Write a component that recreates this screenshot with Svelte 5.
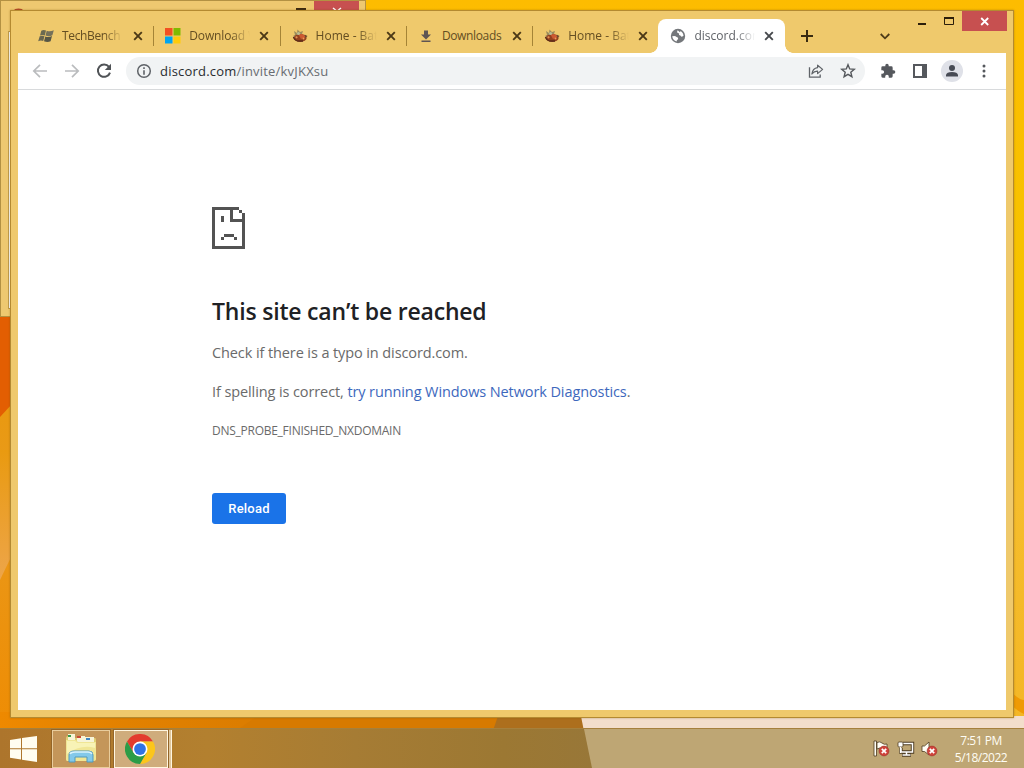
<script>
  const tabs = [
    { title: 'TechBench b', icon: 'flag', ls: -0.35 },
    { title: 'Download V', icon: 'ms', ls: -0.15 },
    { title: 'Home - Bat', icon: 'bug', ls: 0 },
    { title: 'Downloads', icon: 'down', ls: -0.35 },
    { title: 'Home - Bat', icon: 'bug', ls: 0 },
    { title: 'discord.com', icon: 'globe', ls: 0, active: true }
  ];
</script>

<div class="desktop">
  <svg class="wallpaper" width="1024" height="768" viewBox="0 0 1024 768" aria-hidden="true">
    <defs>
      <linearGradient id="left" x1="0" y1="0" x2="0" y2="1">
        <stop offset="0" stop-color="#e99800" /><stop offset=".4" stop-color="#e99a1c" /><stop offset="1" stop-color="#ef8a00" />
      </linearGradient>
      <linearGradient id="right" x1="0" y1="0" x2="0" y2="1">
        <stop offset="0" stop-color="#fdbc00" /><stop offset=".42" stop-color="#f5c400" /><stop offset=".65" stop-color="#f6bd2c" /><stop offset="1" stop-color="#f3b524" />
      </linearGradient>
      <linearGradient id="floor" x1="0" y1="0" x2="1" y2="0">
        <stop offset="0" stop-color="#ee8900" /><stop offset=".25" stop-color="#e28100" /><stop offset=".6" stop-color="#d97b00" /><stop offset="1" stop-color="#b87118" />
      </linearGradient>
      <linearGradient id="streak" x1="0" y1="0" x2="0" y2="1">
        <stop offset="0" stop-color="#e99a10" /><stop offset="1" stop-color="#eda54a" />
      </linearGradient>
    </defs>
    <rect width="1024" height="768" fill="url(#right)" />
    <rect y="300" width="512" height="468" fill="url(#left)" />
    <path d="M0 300H12V404L0 417Z" fill="#e35e02" />
    <path d="M0 450H12V555L0 580Z" fill="url(#streak)" />
    <rect y="712" width="500" height="56" fill="url(#floor)" />
    <path d="M240 728L256 717H512V768H200Z" fill="#d77a00" />
    <path d="M498 716H584L592 768H480Z" fill="#ad6f1d" />
    <path d="M581 716H1024V768H591Z" fill="#f3decb" />
    <path d="M1010 690Q1018 700 1024 700V714Q1016 710 1010 704Z" fill="#ef9a05" />
  </svg>

  <div class="back-window">
    <svg class="back-title" width="364" height="12" viewBox="0 0 364 12">
      <path d="M12 10a6 4 0 0 1 11 0Z" fill="#b5482b" />
      <path d="M295 7H305V10H295Z" fill="#3b2a12" />
      <rect x="313" y="0" width="45" height="12" fill="#c75050" />
      <path d="M332 7L337 11M340 7L335 11" stroke="#fff" stroke-width="1.5" />
    </svg>
    <div class="back-client"></div>
  </div>

  <div class="window">
    <div class="tabstrip">
      <div class="tabs">
        {#each tabs as tab}
          <div class="tab" class:active={tab.active}>
            <svg class="fav" width="16" height="16" viewBox="0 0 16 16">
              {#if tab.icon === 'flag'}
                <path d="M3.3 2.700Q5.5 1.3 8 2.500L6.8 7.4Q4.400 6.300 2 7.600Z" fill="#6b6a51" />
                <path d="M8.7 2.800Q12 4.100 15.800 2.300L14.400 7.300Q11 8.900 7.500 7.600Z" fill="#75715a" />
                <path d="M1.700 8.300Q4.200 7.100 6.500 8.200L5.200 13Q2.800 12 .2 13.200Z" fill="#68654f" />
                <path d="M7.300 8.400Q10.600 9.700 14 8.100L12.600 13.300Q9.600 14.700 6 13.300Z" fill="#565646" />
              {:else if tab.icon === 'ms'}
                <path d="M0 0H7.500V7.500H0Z" fill="#f25022" /><path d="M8.500 0H15.500V7.500H8.500Z" fill="#7fba00" />
                <path d="M0 8.500H7.500V15.500H0Z" fill="#00a4ef" /><path d="M8.500 8.500H15.500V15.500H8.500Z" fill="#ffcb08" />
              {:else if tab.icon === 'bug'}
                <path d="M2 3L5 5L5.500 1.500L8 4L11 3L10 6L3 10L1 8L3 7Z" fill="#9b8c5c" />
                <ellipse cx="8.300" cy="10" rx="6.300" ry="3.900" fill="#93401f" />
                <path d="M6.500 6.500Q11 4.500 14 9L9 11Z" fill="#cc5a32" />
                <path d="M1.500 9Q2 12 5.500 13H11" stroke="#5b2b18" stroke-width="1.300" fill="none" />
                <circle cx="6.500" cy="5.500" r="1.600" fill="#b9bc93" /><circle cx="4.500" cy="9.300" r="1.100" fill="#e2904f" /><circle cx="11.500" cy="10.500" r="1" fill="#ee9b56" />
                <path d="M12.500 6.500L15.500 8L13.500 10Z" fill="#6a4b2e" />
              {:else if tab.icon === 'down'}
                <path d="M6 2.500H10V6.500H13L8 11.500L3 6.500H6ZM3.500 12.500H12.500V14H3.500Z" fill="#5f5553" />
              {:else}
                <circle cx="8" cy="8" r="7.200" fill="#74777b" />
                <path d="M2.200 8.300Q5.300 7.300 6.600 9.100Q8.700 9.300 8.100 11.200Q6.600 11.400 6.600 13.500Q3 12.600 2.200 8.300ZM7.700 2.200Q6.300 4.500 8.200 5.100Q9.800 5.500 9 7.100Q10.600 7.300 11.200 8.600Q12.800 8.900 13.600 7.600Q13.200 4.700 10.700 3L9.900 4.200Z" fill="#fff" />
              {/if}
            </svg>
            <span class="title" style:letter-spacing="{tab.ls}px">{tab.title}</span>
            <svg class="x" width="10" height="10" viewBox="0 0 10 10"><path d="M1.200 1.200L8.800 8.800M8.800 1.200L1.200 8.800" /></svg>
          </div>
        {/each}
      </div>
      <svg class="plus" width="12" height="12" viewBox="0 0 12 12"><path d="M6 0V12M0 6H12" /></svg>
      <svg class="chev" width="10" height="7" viewBox="0 0 10 7"><path d="M.7 1L5 5.300L9.300 1" /></svg>
      <div class="controls">
        <svg width="90" height="20" viewBox="0 0 90 20">
          <path d="M1 13H9" stroke="#2c1e0a" stroke-width="2" />
          <path d="M27.500 7.500H36.500V13.500H27.500Z" fill="none" stroke="#2c1e0a" /><path d="M27 7H37" stroke="#2c1e0a" stroke-width="2" />
          <rect x="45" y="0" width="45" height="20" fill="#c75050" />
          <path d="M64.200 7L71.200 14M71.200 7L64.200 14" stroke="#fff" stroke-width="1.800" />
        </svg>
      </div>
    </div>

    <div class="client">
      <div class="toolbar">
        <svg class="nav" width="16" height="16" viewBox="0 0 16 16"><path d="M15 8H2M8 1.800L1.800 8L8 14.200" fill="none" stroke="#babcbe" stroke-width="1.700" /></svg>
        <svg class="nav" width="16" height="16" viewBox="0 0 16 16"><path d="M1 8H14M8 1.800L14.200 8L8 14.200" fill="none" stroke="#babcbe" stroke-width="1.700" /></svg>
        <svg class="nav" width="16" height="16" viewBox="0 0 16 16"><path d="M13 3.800A6.200 6.200 0 1 0 14 9.600" fill="none" stroke="#505357" stroke-width="2" /><path d="M15 .8V7H8.800Z" fill="#505357" /></svg>
        <div class="omnibox">
          <svg width="16" height="16" viewBox="0 0 16 16"><circle cx="8" cy="8" r="6.300" fill="none" stroke="#5f6368" stroke-width="1.500" /><path d="M7.200 4.300H8.800V5.900H7.200ZM7.200 7.200H8.800V11.800H7.200Z" fill="#5f6368" /></svg>
          <span class="url"><b>discord.com</b>/invite/kvJKXsu</span>
          <svg class="share" width="16" height="16" viewBox="0 0 16 16"><path d="M1.500 4.200V14.200H12.200V11.500" fill="none" stroke="#5f6368" stroke-width="1.300" /><path d="M9.600 2.200L14.600 6.400L9.600 10.600V8.200Q6.200 8 3.900 11Q4.700 5.300 9.600 4.700Z" fill="none" stroke="#5f6368" stroke-width="1.200" stroke-linejoin="round" /></svg>
          <svg width="16" height="16" viewBox="0 0 16 16"><path d="M8 1.700L9.700 5.900L14.300 6.300L10.800 9.200L11.900 13.700L8 11.300L4.100 13.700L5.200 9.200L1.700 6.300L6.300 5.900Z" fill="none" stroke="#55585c" stroke-width="1.400" /></svg>
        </div>
        <svg class="ext" width="16" height="16" viewBox="0 0 24 24"><path d="M20.500 11H19V7a2 2 0 0 0-2-2h-4V3.500a2.500 2.500 0 0 0-5 0V5H4a2 2 0 0 0-2 2v3.800h1.500a2.700 2.700 0 0 1 0 5.400H2V20a2 2 0 0 0 2 2h3.800v-1.500a2.700 2.700 0 0 1 5.400 0V22H17a2 2 0 0 0 2-2v-4h1.500a2.500 2.500 0 0 0 0-5z" fill="#55585d" /></svg>
        <svg class="panel" width="16" height="16" viewBox="0 0 16 16"><path d="M1 1H15V15H1ZM3 3V13H10V3Z" fill="#55585d" fill-rule="evenodd" /></svg>
        <svg class="avatar" width="22" height="22" viewBox="0 0 22 22"><circle cx="11" cy="11" r="11" fill="#dfe1e8" /><circle cx="11" cy="8" r="3" fill="#474b55" /><path d="M5 16.500V15Q5.500 12 11 12Q16.500 12 17 15V16.500Z" fill="#474b55" /></svg>
        <svg class="dots" width="4" height="14" viewBox="0 0 4 14"><circle cx="2" cy="2" r="1.500" /><circle cx="2" cy="7" r="1.500" /><circle cx="2" cy="12" r="1.500" /></svg>
      </div>

      <main>
        <svg class="sad" width="33" height="42" viewBox="0 0 33 42" shape-rendering="crispEdges">
          <path d="M0 0H27V3H30V6H33V42H0ZM3 3V39H30V15H18V3ZM21 3V12H30V6H27V3Z" fill="#535353" fill-rule="evenodd" />
          <path d="M9 9H12V15H9ZM12 27H22V30H12ZM9 30H12V33H9ZM22 30H25V33H22Z" fill="#535353" />
        </svg>
        <h1>This site can’t be reached</h1>
        <p class="p1">Check if there is a typo in discord.com.</p>
        <p class="p2">If spelling is correct, <span class="link">try running Windows Network Diagnostics</span>.</p>
        <div class="code">DNS_PROBE_FINISHED_NXDOMAIN</div>
        <button>Reload</button>
      </main>
    </div>
  </div>

  <div class="taskbar">
    <svg class="start" width="27" height="26" viewBox="0 0 27 26"><path d="M0 4L11 2.300V12.300H0ZM12 2.100L27 0V12.300H12ZM0 13.300H11V23.500L0 21.800ZM12 13.300H27V26L12 23.700Z" fill="#fffdf0" /></svg>
    <div class="task">
      <svg width="32" height="30" viewBox="0 0 32 30">
        <path d="M1 4Q1 2 3 2H9L10 4H30Q31 4 31 6V26H1Z" fill="#dfcf75" />
        <path d="M3 0H10V7H3ZM12 2H20V8H12ZM20 3H29V9H20Z" fill="#f7f4d7" />
        <path d="M3 1H6V3H3Z" fill="#3b9a4a" /><path d="M12 2H16V4H12Z" fill="#ca4936" /><path d="M21 4H25V6H21Z" fill="#3d86c4" />
        <path d="M1 6H11L13 8H31V25Q31 27 29 27H2Q1 27 1 25Z" fill="#f0e695" />
        <path d="M2 7H10L12 9H30V14Q16 10 2 20Z" fill="#f8f3b6" />
        <path d="M4 28V21Q4 17 9 17H24Q28 17 28 21V28H22V23H10V28Z" fill="#83c9ea" stroke="#5199bb" />
        <path d="M5 20Q6 18 10 18H23Q26 18 27 20" fill="none" stroke="#daf3fb" stroke-width="1.500" />
      </svg>
    </div>
    <div class="stack">
      <div class="task current">
        <svg width="30" height="30" viewBox="0 0 48 48">
          <path d="M3.200 12A24 24 0 0 1 44.800 12H24L13.600 30Z" fill="#e33b2e" />
          <path d="M24 12H44.800A24 24 0 0 1 24 48L34.400 30Z" fill="#fcc61b" />
          <path d="M13.600 30L3.200 12A24 24 0 0 0 24 48L34.400 30Z" fill="#2c9c47" />
          <circle cx="24" cy="24" r="12" fill="#fff" /><circle cx="24" cy="24" r="9.400" fill="#3173e4" />
        </svg>
      </div>
      <div class="edge"></div>
    </div>
    <div class="tray">
      <svg width="66" height="18" viewBox="0 0 66 18">
        <g stroke="#4c3b20" stroke-width=".8">
          <path d="M1 1H3.500V16H1Z" fill="#fffdf4" /><path d="M4 2.500Q7 1 9 3T14 4V9.500Q11 11 9 9T4 9Z" fill="#fffdf4" />
          <path d="M30 3.500H39.500V12H28V8" fill="none" stroke-width="3.400" /><path d="M29 15H38M33.500 12V15" fill="none" stroke-width="3.400" />
          <path d="M30 3.500H39.500V12H28V8" fill="none" stroke="#fff" stroke-width="1.500" />
          <path d="M29.500 15H37.500M33.500 12V15" fill="none" stroke="#fff" stroke-width="1.500" />
          <rect x="25" y="2" width="5" height="5" rx="1" fill="#fff" /><path d="M27.500 7V13" stroke="#fff" stroke-width="1.300" />
          <path d="M49 6H51.500L56 2V15L51.500 11.500H49Z" fill="#fffdf4" />
        </g>
        {#each [11, 59] as cx}
          <circle {cx} cy="11" r="4.900" fill="#d0443c" stroke="#9c2f28" stroke-width=".6" />
          <path d="M{cx - 2.2} 8.800L{cx + 2.2} 13.200M{cx + 2.2} 8.800L{cx - 2.2} 13.200" stroke="#fff" stroke-width="1.700" />
        {/each}
      </svg>
      <div class="clock"><span>7:51 PM</span><span>5/18/2022</span></div>
    </div>
  </div>
</div>

<style>
  :global(body) { margin: 0; overflow: hidden; }
  .desktop { position: relative; width: 1024px; height: 768px; overflow: hidden; font-family: "Open Sans", "Noto Sans", sans-serif; }
  .desktop * { box-sizing: border-box; }
  svg { display: block; flex: none; }
  .wallpaper { position: absolute; inset: 0; }
  .back-window { position: absolute; left: 0; top: 0; width: 366px; height: 317px; background: #eec870; border: 1px solid #b39143; }
  .back-client { width: 10px; height: 278px; margin: 18px 0 0 7px; border: 1px solid #bf9b4b; background: #fff; }
  .window { position: absolute; left: 10px; top: 10px; width: 1004px; height: 708px; padding: 0 7px 7px; background: #efc96c; border: 1px solid #b48a31; display: flex; flex-direction: column; box-shadow: 0 0 2px rgba(120, 80, 0, .4); }
  .tabstrip { height: 42px; display: flex; align-items: flex-start; padding-left: 9px; }
  .tabs { display: flex; padding-top: 8px; }
  .tab { width: 126.300px; height: 34px; padding-left: 12px; display: flex; align-items: center; position: relative; }
  .tab:first-child { padding-left: 11px; }
  .tab:not(.active)::after { content: ''; position: absolute; right: -1px; top: 7px; width: 1px; height: 20px; background: #a58436; }
  .tab.active { background: #fff; border-radius: 8px 8px 0 0; }
  .tab:nth-last-child(2)::after { display: none; }
  .tab.active::before, .tab.active::after { content: ''; position: absolute; bottom: 0; width: 8px; height: 8px; }
  .tab.active::before { left: -8px; background: radial-gradient(circle at 0 0, transparent 7.500px, #fff 8px); }
  .tab.active::after { right: -8px; background: radial-gradient(circle at 100% 0, transparent 7.500px, #fff 8px); }
  .title { flex: none; width: 66px; margin-left: 8px; white-space: nowrap; font-size: 12px; line-height: 18px; color: #644e22; mask-image: linear-gradient(90deg, #000 42px, transparent 61px); }
  .tab:nth-child(4) .title { mask-image: none; }
  .active .title { color: #606368; }
  .x { margin-left: 4px; fill: none; stroke: #4b3816; stroke-width: 1.900; }
  .tab:first-child .x { margin-left: 5px; }
  .active .x { stroke: #45484c; }
  .plus { margin: 19px 0 0 16px; fill: none; stroke: #392a10; stroke-width: 2; }
  .chev { margin: 22px 0 0 67px; fill: none; stroke: #4e3c18; stroke-width: 1.800; }
  .controls { margin-left: auto; margin-right: -1px; }
  .client { flex: 1; background: #fff; display: flex; flex-direction: column; }
  .toolbar { height: 37px; padding-left: 14px; display: flex; align-items: center; border-bottom: 1px solid #d8dadc; }
  .nav { margin-right: 16px; }
  .omnibox { height: 28px; width: 739px; margin-left: -2px; padding: 0 9px 0 10px; border-radius: 14px; background: #f1f3f4; display: flex; align-items: center; }
  .url { margin-left: 8px; font-size: 13px; line-height: 20px; letter-spacing: .2px; color: #686c71; }
  .url b { font-weight: 400; color: #292c30; }
  .share { margin-left: auto; margin-right: 16px; }
  .ext { margin-left: 15px; }
  .panel { margin-left: 16px; }
  .avatar { margin-left: 13px; }
  .dots { margin-left: 19px; fill: #55585d; }
  main { padding: 117px 0 0 194px; color: #6a6a6a; }
  h1 { margin: 45px 0 0; height: 35px; font-size: 23px; line-height: 34px; font-weight: 600; letter-spacing: -.2px; color: #202124; white-space: nowrap; }
  p { margin: 0; font-size: 14.500px; line-height: 22px; letter-spacing: -.1px; white-space: nowrap; }
  .p1 { margin-top: 13px; }
  .p2 { margin-top: 17px; }
  .link { color: #3d68bd; }
  .code { margin-top: 19px; font-size: 12px; line-height: 18px; letter-spacing: -.260px; }
  button { display: block; margin-top: 53px; width: 74px; height: 31px; padding: 0; border: 0; border-radius: 3px; background: #1a73e8; color: #fff; font: 500 13px Roboto, sans-serif; letter-spacing: .2px; }
  .taskbar { position: absolute; left: 0; bottom: 0; width: 1024px; height: 40px; display: flex; align-items: center; padding-left: 10px; background: #bea674; border-top: 1px solid #a6803c; isolation: isolate; }
  .taskbar::before { content: ''; position: absolute; z-index: -1; left: 0; top: 0; width: 592px; height: 39px; background: linear-gradient(90deg, #ad752c, #b3802f 35%, #a67c34 60%, #9c7833 85%, #987738); clip-path: polygon(0 0, 584px 0, 592px 100%, 0 100%); }
  .start { margin-right: 15px; }
  .task { width: 58px; height: 38px; display: flex; align-items: center; justify-content: center; border: 1px solid #e9cd9d; background: #c4965a; outline: 1px solid #946528; }
  .stack { display: flex; margin-left: 4px; gap: 1px; }
  .current { width: 54px; padding-right: 2px; border-color: #fff6e0; background: #cfac7c; }
  .edge { width: 3px; background: #dfc69d; border-right: 1px solid #fff6e0; }
  .tray { margin-left: auto; display: flex; align-items: center; }
  .clock { width: 86px; margin-left: -1px; display: flex; flex-direction: column; align-items: center; font-size: 12px; line-height: 17px; letter-spacing: -.5px; color: #fffdf4; }
</style>
